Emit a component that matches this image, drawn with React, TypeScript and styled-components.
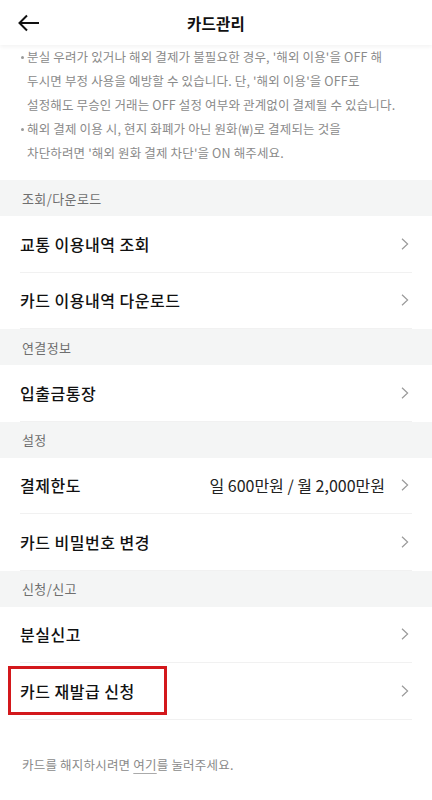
import styled, { createGlobalStyle } from 'styled-components'

const GlobalStyle = createGlobalStyle`
	html,
	body {
		margin: 0;
		padding: 0;
		background: #fff;
		font-family: 'Noto Sans CJK KR', 'Noto Sans', sans-serif;
		-webkit-font-smoothing: antialiased;
	}

	* {
		box-sizing: border-box;
	}
`

const Page = styled.div`
	width: 432px;
	min-height: 800px;
	background: #fff;
	overflow: hidden;
`

const TopBar = styled.header`
	position: relative;
	z-index: 1;
	height: 45px;
	display: flex;
	align-items: center;
	justify-content: center;
	background: #fff;
	box-shadow: 0 2px 4px rgba(0, 0, 0, 0.05);
`

const BackButton = styled.button`
	position: absolute;
	left: 14px;
	top: 8px;
	width: 30px;
	height: 30px;
	padding: 0;
	border: 0;
	background: none;
	display: flex;
	align-items: center;
	justify-content: center;
`

const Title = styled.h1`
	margin: 0;
	font-size: 15.5px;
	font-weight: 700;
	color: #111;
	letter-spacing: 0.3px;
`

const Notice = styled.ul`
	margin: 0;
	padding: 0 4px 15px 27px;
	list-style: none;
`

const NoticeItem = styled.li`
	position: relative;
	font-size: 12.5px;
	line-height: 24px;
	color: #8a8a8a;
	letter-spacing: 0.15px;
	white-space: nowrap;

	&::before {
		content: '';
		position: absolute;
		left: -6px;
		top: 11px;
		width: 3px;
		height: 3px;
		border-radius: 50%;
		background: #9a9a9a;
	}
`

const SectionTitle = styled.div`
	height: 36px;
	display: flex;
	align-items: center;
	padding: 0 22px;
	background: #f4f5f5;
	font-size: 13px;
	color: #6f6f6f;
	letter-spacing: 0.4px;
`

const Row = styled.div`
	position: relative;
	height: 56.5px;
	margin: 0 20px;
	display: flex;
	align-items: center;
	border-bottom: 1px solid #f1f1f1;
`

const RowLabel = styled.span`
	flex: 1;
	font-size: 16px;
	font-weight: 500;
	color: #111;
	letter-spacing: 0.5px;
`

const RowValue = styled.span`
	font-size: 16px;
	color: #222;
	margin-right: 16px;
`

const Chevron = styled.svg`
	margin-right: 3px;
	flex: none;
`

const Highlight = styled.div`
	position: absolute;
	left: -12px;
	top: 3px;
	width: 159px;
	height: 49px;
	border: 3px solid #d3181c;
`

const Footer = styled.p`
	margin: 0;
	padding: 37px 22px 0;
	font-size: 12.5px;
	line-height: 16px;
	color: #8a8a8a;
	letter-spacing: 0.2px;
`

const FooterLink = styled.span`
	text-decoration: underline;
	text-underline-offset: 3px;
	text-decoration-color: #aaa;
`

type Item = { label: string; value?: string; marked?: boolean }

const sections: { title: string; items: Item[] }[] = [
	{
		title: '조회/다운로드',
		items: [{ label: '교통 이용내역 조회' }, { label: '카드 이용내역 다운로드' }]
	},
	{ title: '연결정보', items: [{ label: '입출금통장' }] },
	{
		title: '설정',
		items: [
			{ label: '결제한도', value: '일 600만원 / 월 2,000만원' },
			{ label: '카드 비밀번호 변경' }
		]
	},
	{
		title: '신청/신고',
		items: [{ label: '분실신고' }, { label: '카드 재발급 신청', marked: true }]
	}
]

function ChevronIcon() {
	return (
		<Chevron width='8' height='12' viewBox='0 0 8 12'>
			<path d='M1 0.8 L6.6 6 L1 11.2' fill='none' stroke='#9a9a9a' strokeWidth='1.2' />
		</Chevron>
	)
}

export default function App() {
	return (
		<>
			<GlobalStyle />
			<Page>
				<TopBar>
					<BackButton aria-label='뒤로'>
						<svg width='24' height='18' viewBox='0 0 24 18'>
							<path
								d='M22 9 H3 M10 1.5 L2.5 9 L10 16.5'
								fill='none'
								stroke='#111'
								strokeWidth='2'
							/>
						</svg>
					</BackButton>
					<Title>카드관리</Title>
				</TopBar>
				<Notice>
					<NoticeItem>
						분실 우려가 있거나 해외 결제가 불필요한 경우, '해외 이용'을 OFF 해
						<br />
						두시면 부정 사용을 예방할 수 있습니다. 단, '해외 이용'을 OFF로
						<br />
						설정해도 무승인 거래는 OFF 설정 여부와 관계없이 결제될 수 있습니다.
					</NoticeItem>
					<NoticeItem>
						해외 결제 이용 시, 현지 화폐가 아닌 원화(₩)로 결제되는 것을
						<br />
						차단하려면 '해외 원화 결제 차단'을 ON 해주세요.
					</NoticeItem>
				</Notice>
				{sections.map((section) => (
					<section key={section.title}>
						<SectionTitle>{section.title}</SectionTitle>
						{section.items.map((item) => (
							<Row key={item.label}>
								<RowLabel>{item.label}</RowLabel>
								{item.value && <RowValue>{item.value}</RowValue>}
								<ChevronIcon />
								{item.marked && <Highlight />}
							</Row>
						))}
					</section>
				))}
				<Footer>
					카드를 해지하시려면 <FooterLink>여기</FooterLink>를 눌러주세요.
				</Footer>
			</Page>
		</>
	)
}
